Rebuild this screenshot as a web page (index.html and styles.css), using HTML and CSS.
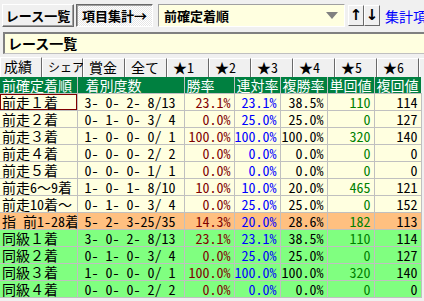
FILE: index.html
```html
<!DOCTYPE html>
<html lang="ja">
<head>
<meta charset="utf-8">
<link rel="stylesheet" href="styles.css">
</head>
<body>
<div class="toolbar">
  <div class="btn raised">レース一覧</div>
  <div class="btn pressed">項目集計→</div>
  <div class="combo"><span class="combo-text">前確定着順</span><span class="combo-arrow"></span></div>
  <div class="arrows">
    <div class="abtn">↑</div>
    <div class="abtn">↓</div>
  </div>
  <div class="link">集計項目</div>
</div>
<div class="titlebox">レース一覧</div>
<div class="tabs">
  <div class="tab active">成績</div>
  <div class="tab small">シェア</div>
  <div class="tab">賞金</div>
  <div class="tab">全て</div>
  <div class="tab">★<span class="n">1</span></div>
  <div class="tab">★<span class="n">2</span></div>
  <div class="tab">★<span class="n">3</span></div>
  <div class="tab">★<span class="n">4</span></div>
  <div class="tab">★<span class="n">5</span></div>
  <div class="tab">★<span class="n">6</span></div>
  <div class="tab rest"></div>
</div>
<div class="grid-wrap">
<table class="grid">
  <colgroup>
    <col class="c1"><col class="c2"><col class="c3"><col class="c4"><col class="c5"><col class="c6"><col class="c7">
  </colgroup>
  <thead>
    <tr><th>前確定着順</th><th class="h2">着別度数</th><th>勝率</th><th>連対率</th><th>複勝率</th><th>単回値</th><th>複回値</th></tr>
  </thead>
  <tbody>
    <tr class="y"><td class="name focus">前走１着</td><td class="cnt">3- 0- 2- 8/13</td><td class="win">23.1%</td><td class="ren">23.1%</td><td class="fuk">38.5%</td><td class="tan">110</td><td class="fkv">114</td></tr>
    <tr class="y"><td class="name">前走２着</td><td class="cnt">0- 1- 0- 3/ 4</td><td class="win">0.0%</td><td class="ren">25.0%</td><td class="fuk">25.0%</td><td class="tan">0</td><td class="fkv">127</td></tr>
    <tr class="y"><td class="name">前走３着</td><td class="cnt">1- 0- 0- 0/ 1</td><td class="win">100.0%</td><td class="ren">100.0%</td><td class="fuk">100.0%</td><td class="tan">320</td><td class="fkv">140</td></tr>
    <tr class="y"><td class="name">前走４着</td><td class="cnt">0- 0- 0- 2/ 2</td><td class="win">0.0%</td><td class="ren">0.0%</td><td class="fuk">0.0%</td><td class="tan">0</td><td class="fkv">0</td></tr>
    <tr class="y"><td class="name">前走５着</td><td class="cnt">0- 0- 0- 1/ 1</td><td class="win">0.0%</td><td class="ren">0.0%</td><td class="fuk">0.0%</td><td class="tan">0</td><td class="fkv">0</td></tr>
    <tr class="y"><td class="name">前走<span class="h">6</span>〜<span class="h">9</span>着</td><td class="cnt">1- 0- 1- 8/10</td><td class="win">10.0%</td><td class="ren">10.0%</td><td class="fuk">20.0%</td><td class="tan">465</td><td class="fkv">121</td></tr>
    <tr class="y"><td class="name">前走<span class="h">10</span>着〜</td><td class="cnt">0- 1- 0- 3/ 4</td><td class="win">0.0%</td><td class="ren">25.0%</td><td class="fuk">25.0%</td><td class="tan">0</td><td class="fkv">152</td></tr>
    <tr class="o"><td class="name">指<span class="h"> </span>前<span class="h">1-28</span>着</td><td class="cnt">5- 2- 3-25/35</td><td class="win">14.3%</td><td class="ren">20.0%</td><td class="fuk">28.6%</td><td class="tan">182</td><td class="fkv">113</td></tr>
    <tr class="g"><td class="name">同級１着</td><td class="cnt">3- 0- 2- 8/13</td><td class="win">23.1%</td><td class="ren">23.1%</td><td class="fuk">38.5%</td><td class="tan">110</td><td class="fkv">114</td></tr>
    <tr class="g"><td class="name">同級２着</td><td class="cnt">0- 1- 0- 3/ 4</td><td class="win">0.0%</td><td class="ren">25.0%</td><td class="fuk">25.0%</td><td class="tan">0</td><td class="fkv">127</td></tr>
    <tr class="g"><td class="name">同級３着</td><td class="cnt">1- 0- 0- 0/ 1</td><td class="win">100.0%</td><td class="ren">100.0%</td><td class="fuk">100.0%</td><td class="tan">320</td><td class="fkv">140</td></tr>
    <tr class="g"><td class="name">同級４着</td><td class="cnt">0- 0- 0- 2/ 2</td><td class="win">0.0%</td><td class="ren">0.0%</td><td class="fuk">0.0%</td><td class="tan">0</td><td class="fkv">0</td></tr>
  </tbody>
</table>
</div>
</body>
</html>
```
FILE: styles.css
```css
html, body {
  margin: 0;
  padding: 0;
}
body {
  width: 424px;
  height: 301px;
  overflow: hidden;
  background: #f0f0f0;
  font-family: "Noto Sans CJK JP", "DejaVu Sans", sans-serif;
  font-size: 14px;
  color: #000;
}
.h, .n {
  font-feature-settings: "hwid";
}
.toolbar {
  height: 31px;
  display: flex;
  align-items: center;
  padding-left: 2px;
  box-sizing: border-box;
  white-space: nowrap;
}
.toolbar > * {
  flex-shrink: 0;
}
.btn {
  height: 23px;
  box-sizing: border-box;
  display: flex;
  align-items: center;
  justify-content: center;
  font-weight: bold;
  font-size: 13px;
  line-height: 1;
  white-space: nowrap;
}
.raised {
  width: 72px;
  background: #f0f0f0;
  border-top: 1px solid #fff;
  border-left: 1px solid #fff;
  border-right: 1px solid #696969;
  border-bottom: 1px solid #696969;
  box-shadow: inset -1px -1px 0 #a0a0a0;
}
.pressed {
  width: 77px;
  margin-left: 2px;
  background: repeating-conic-gradient(#ffffff 0 25%, #e6e6e6 0 50%) 0 0 / 2px 2px;
  border-top: 1px solid #696969;
  border-left: 1px solid #696969;
  border-right: 1px solid #fff;
  border-bottom: 1px solid #fff;
  box-shadow: inset 1px 1px 0 #a0a0a0;
}
.combo {
  margin-left: 5px;
  width: 187px;
  height: 23px;
  box-sizing: border-box;
  background: #ffffe0;
  border-top: 1px solid #a0a0a0;
  border-left: 1px solid #a0a0a0;
  border-right: 1px solid #fff;
  border-bottom: 1px solid #fff;
  display: flex;
  align-items: center;
  justify-content: space-between;
  padding: 0 6px 0 5px;
}
.combo-text {
  font-weight: bold;
  font-size: 13px;
  line-height: 1;
}
.combo-arrow {
  width: 0;
  height: 0;
  border-left: 6px solid transparent;
  border-right: 6px solid transparent;
  border-top: 7px solid #808080;
}
.arrows {
  display: flex;
  margin-left: 3px;
}
.abtn {
  width: 16px;
  height: 21px;
  box-sizing: border-box;
  background: #f0f0f0;
  border-top: 1px solid #fff;
  border-left: 1px solid #fff;
  border-right: 1px solid #696969;
  border-bottom: 1px solid #696969;
  display: flex;
  align-items: center;
  justify-content: center;
  font-weight: bold;
  font-size: 15px;
  line-height: 1;
  font-family: "DejaVu Sans", sans-serif;
}
.link {
  margin-left: 5px;
  color: #0000ff;
  white-space: nowrap;
  line-height: 1;
}
.titlebox {
  margin: 1px 0 0 3px;
  height: 22px;
  box-sizing: border-box;
  background: #ffffe0;
  border-top: 2px solid #808080;
  border-left: 2px solid #808080;
  border-bottom: 1px solid #c0c0c0;
  font-weight: bold;
  font-size: 14px;
  line-height: 19px;
  padding-left: 3px;
}
.tabs {
  margin-top: 3px;
  height: 20px;
  display: flex;
  align-items: flex-end;
}
.tab {
  width: 42px;
  flex-shrink: 0;
  height: 19px;
  box-sizing: border-box;
  border-top: 1px solid #fff;
  border-left: 1px solid #fff;
  border-right: 1px solid #696969;
  background: #f0f0f0;
  font-size: 14px;
  line-height: 16px;
  padding-left: 5px;
  white-space: nowrap;
}
.tab.active {
  height: 20px;
  padding-left: 3px;
}
.tab.small {
  font-size: 12px;
  width: 41px;
}
.tab.rest {
  flex: 1 1 auto;
  width: auto;
  border-right: none;
}
.grid-wrap {
  width: 421px;
}
.grid {
  border-collapse: collapse;
  table-layout: fixed;
  width: 421px;
  white-space: pre;
}
.c1 { width: 77px; }
.c2 { width: 107px; }
.c3 { width: 50px; }
.c4 { width: 46px; }
.c5 { width: 47px; }
.c6 { width: 47px; }
.c7 { width: 47px; }
.grid th, .grid td {
  height: 16px;
  padding: 0;
  line-height: 16px;
  font-weight: normal;
  overflow: hidden;
}
.grid th {
  background: #008040;
  color: #fff;
  text-align: left;
  padding-left: 2px;
  border-left: 1px solid #c0c0c0;
  border-bottom: 1px solid #c0c0c0;
}
.grid th:first-child {
  border-left: none;
}
.grid th.h2 {
  padding-left: 8px;
}
.grid td {
  border: 1px solid #c0c0c0;
  text-align: right;
  padding-right: 3px;
  font-feature-settings: "hwid";
}
.grid td:first-child {
  border-left: none;
}
.grid td.name {
  text-align: left;
  padding-left: 2px;
  padding-right: 0;
  font-feature-settings: normal;
}
.grid td.name .h {
  font-feature-settings: "hwid";
}
.grid td.focus {
  box-shadow: inset 0 0 0 1px #800000;
}
.grid td.cnt {
  text-align: left;
  padding-left: 7px;
}
.y td { background: #ffffe0; }
.o td { background: #ffc080; }
.g td { background: #80ff80; }
.win { color: #800000; }
.ren { color: #0000ff; }
.fuk { color: #000; }
.tan { color: #008000; }
.fkv { color: #000; }
```
